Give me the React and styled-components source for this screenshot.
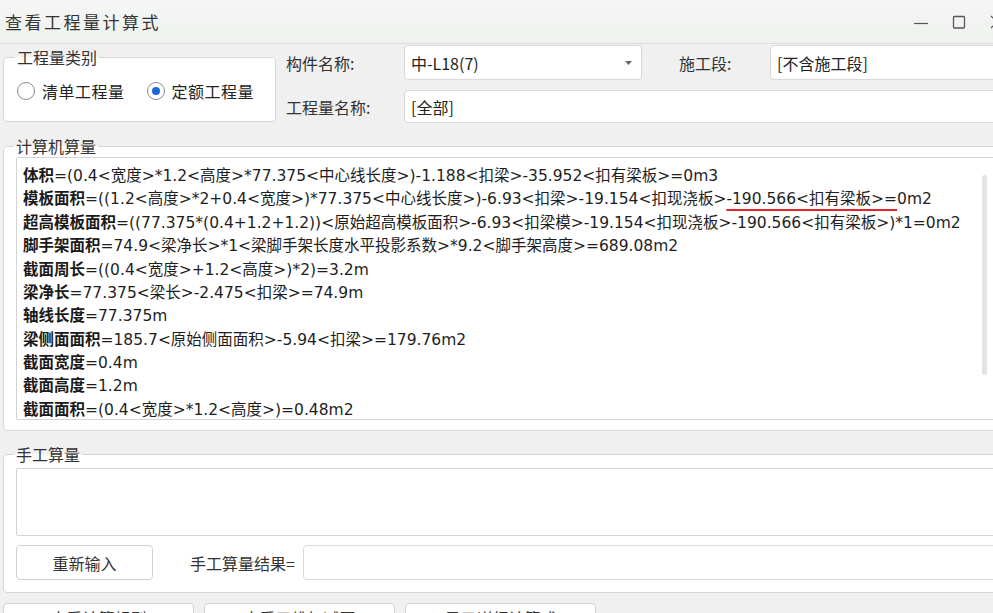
import styled, { createGlobalStyle } from 'styled-components'

const GlobalStyle = createGlobalStyle`
  html, body {
    margin: 0;
    padding: 0;
    overflow: hidden;
    background: #f0f0f0;
  }
  body {
    font-family: "Noto Sans CJK SC", "Noto Sans", sans-serif;
    color: #222;
  }
`

const Window = styled.div`
  width: 1016px;
  height: 613px;
  background: #f0f0f0;
  overflow: hidden;
`

const TitleBar = styled.div`
  height: 43px;
  border-bottom: 1px solid #dcdcdc;
  background: linear-gradient(#f5f6f5, #eef1ee);
  display: flex;
  align-items: center;
`

const Title = styled.div`
  flex: 1;
  padding-left: 5px;
  font-size: 17px;
  letter-spacing: 2.5px;
  color: #333;
`

const WinButton = styled.div`
  width: 38px;
  height: 43px;
  display: flex;
  align-items: center;
  justify-content: center;
  color: #555;
`

const Content = styled.div`
  padding: 0 3px;
`

const TopRow = styled.div`
  display: flex;
  align-items: flex-start;
  margin-top: 1px;
`

const Group = styled.fieldset`
  box-sizing: border-box;
  min-width: 0;
  width: ${(p) => (p.$w ? `${p.$w}px` : 'auto')};
  margin: ${(p) => p.$mt || 0}px 0 0;
  padding: ${(p) => p.$pad};
  border: 1px solid #d6d6d6;
  border-radius: 4px;
  background: #fff;
`

const Legend = styled.legend`
  padding: 0 2px;
  margin-left: -2px;
  font-size: 16px;
  line-height: 20px;
  color: #333;
`

const RadioRow = styled.div`
  display: flex;
  align-items: center;
  gap: 22px;
  height: 20px;
  white-space: nowrap;
`

const RadioOption = styled.label`
  display: flex;
  align-items: center;
  gap: 7px;
  font-size: 16px;
  letter-spacing: 0.5px;
  color: #222;
`

const RadioDot = styled.span`
  box-sizing: border-box;
  flex-shrink: 0;
  width: 18px;
  height: 18px;
  border-radius: 50%;
  border: 1px solid #8c8c8c;
  background: #fff;
  display: flex;
  align-items: center;
  justify-content: center;
  &::after {
    content: '';
    width: 8px;
    height: 8px;
    border-radius: 50%;
    background: ${(p) => (p.$checked ? '#1769e0' : 'transparent')};
  }
`

const Form = styled.div`
  flex: 1;
  margin-left: 10px;
  display: flex;
  flex-direction: column;
`

const FormRow = styled.div`
  display: flex;
  align-items: center;
  height: ${(p) => p.$h}px;
  margin-top: ${(p) => p.$mt || 0}px;
`

const FieldLabel = styled.div`
  width: ${(p) => p.$w}px;
  margin-left: ${(p) => p.$ml || 0}px;
  flex-shrink: 0;
  font-size: 16px;
  color: #333;
  white-space: nowrap;
`

const Field = styled.div`
  box-sizing: border-box;
  height: 100%;
  width: ${(p) => (p.$w ? `${p.$w}px` : 'auto')};
  flex: ${(p) => (p.$w ? 'none' : 1)};
  display: flex;
  align-items: center;
  justify-content: space-between;
  padding: 0 9px 0 6px;
  background: #fff;
  border: 1px solid #d9d9d9;
  border-radius: 4px;
  font-size: 16px;
  color: #222;
  white-space: nowrap;
`

const TextPanel = styled.div`
  box-sizing: border-box;
  height: ${(p) => p.$h}px;
  margin-top: ${(p) => p.$mt || 0}px;
  border: 1px solid #d4d4d4;
  border-radius: 2px;
  background: #fff;
  display: flex;
  overflow: hidden;
`

const Lines = styled.div`
  flex: 1;
  padding: 7px 0 0 6px;
  font-family: "DejaVu Sans", "Noto Sans CJK SC", sans-serif;
  font-size: 15.5px;
  line-height: 23.37px;
  color: #1e1e1e;
  white-space: nowrap;
  overflow: hidden;
`

const Key = styled.b`
  font-weight: 700;
  color: #1a1a1a;
`

const Marked = styled.span`
  text-decoration: underline;
  text-decoration-color: #e3242b;
  text-decoration-thickness: 1.5px;
  text-underline-offset: 5px;
`

const ScrollTrack = styled.div`
  width: 17px;
  flex-shrink: 0;
  padding-top: 17px;
`

const ScrollThumb = styled.div`
  width: 5px;
  height: 200px;
  border-radius: 3px;
  background: #e3e3e3;
`

const ActionRow = styled.div`
  display: flex;
  align-items: center;
  height: 35px;
  margin-top: 9px;
`

const Button = styled.button`
  box-sizing: border-box;
  width: ${(p) => p.$w}px;
  height: ${(p) => p.$h}px;
  padding: ${(p) => p.$pt || 0}px 0 0;
  display: flex;
  align-items: ${(p) => (p.$pt ? 'flex-start' : 'center')};
  justify-content: center;
  background: #fff;
  border: 1px solid #d2d2d2;
  border-radius: 4px;
  font-family: inherit;
  font-size: 16px;
  color: #333;
  flex-shrink: 0;
`

const ResultLabel = styled.div`
  margin: 0 8px 0 37px;
  font-size: 16px;
  color: #333;
  white-space: nowrap;
`

const Footer = styled.div`
  display: flex;
  gap: 10px;
  margin-top: 10px;
`

const lines = [
  ['体积', '=(0.4<宽度>*1.2<高度>*77.375<中心线长度>)-1.188<扣梁>-35.952<扣有梁板>=0m3'],
  ['模板面积', '=((1.2<高度>*2+0.4<宽度>)*77.375<中心线长度>)-6.93<扣梁>-19.154<扣现浇板>', '-190.566<扣有梁板>=', '0m2'],
  ['超高模板面积', '=((77.375*(0.4+1.2+1.2))<原始超高模板面积>-6.93<扣梁模>-19.154<扣现浇板>-190.566<扣有梁板>)*1=0m2'],
  ['脚手架面积', '=74.9<梁净长>*1<梁脚手架长度水平投影系数>*9.2<脚手架高度>=689.08m2'],
  ['截面周长', '=((0.4<宽度>+1.2<高度>)*2)=3.2m'],
  ['梁净长', '=77.375<梁长>-2.475<扣梁>=74.9m'],
  ['轴线长度', '=77.375m'],
  ['梁侧面面积', '=185.7<原始侧面面积>-5.94<扣梁>=179.76m2'],
  ['截面宽度', '=0.4m'],
  ['截面高度', '=1.2m'],
  ['截面面积', '=(0.4<宽度>*1.2<高度>)=0.48m2'],
]

function App() {
  return (
    <Window>
      <GlobalStyle />
      <TitleBar>
        <Title>查看工程量计算式</Title>
        <WinButton>
          <svg width="14" height="14" viewBox="0 0 14 14">
            <path d="M0 8.5h14" stroke="#555" strokeWidth="1.2" />
          </svg>
        </WinButton>
        <WinButton>
          <svg width="14" height="14" viewBox="0 0 14 14">
            <rect x="1.5" y="1.5" width="11" height="11.5" rx="1" fill="none" stroke="#555" strokeWidth="1.3" />
          </svg>
        </WinButton>
        <WinButton>
          <svg width="14" height="14" viewBox="0 0 14 14">
            <path d="M1 1l12 12M13 1L1 13" stroke="#555" strokeWidth="1.2" />
          </svg>
        </WinButton>
      </TitleBar>

      <Content>
        <TopRow>
          <Group $w={273} $mt={2} $pad="14px 13px 20px">
            <Legend>工程量类别</Legend>
            <RadioRow>
              <RadioOption>
                <RadioDot />
                清单工程量
              </RadioOption>
              <RadioOption>
                <RadioDot $checked />
                定额工程量
              </RadioOption>
            </RadioRow>
          </Group>

          <Form>
            <FormRow $h={35}>
              <FieldLabel $w={118}>构件名称:</FieldLabel>
              <Field $w={238}>
                中-L18(7)
                <svg width="7" height="4" viewBox="0 0 7 4">
                  <path d="M0 0h7L3.5 4z" fill="#666" />
                </svg>
              </Field>
              <FieldLabel $w={91} $ml={37}>施工段:</FieldLabel>
              <Field>[不含施工段]</Field>
            </FormRow>
            <FormRow $h={33} $mt={10}>
              <FieldLabel $w={118}>工程量名称:</FieldLabel>
              <Field>[全部]</Field>
            </FormRow>
          </Form>
        </TopRow>

        <Group $mt={13} $pad="0 12px 10px">
          <Legend>计算机算量</Legend>
          <TextPanel $h={263} $mt={1}>
            <Lines>
              {lines.map(([key, rest, marked, tail]) => (
                <div key={key}>
                  <Key>{key}</Key>
                  {rest}
                  {marked && <Marked>{marked}</Marked>}
                  {tail}
                </div>
              ))}
            </Lines>
            <ScrollTrack>
              <ScrollThumb />
            </ScrollTrack>
          </TextPanel>
        </Group>

        <Group $mt={13} $pad="4px 12px 12px">
          <Legend>手工算量</Legend>
          <TextPanel $h={68} />
          <ActionRow>
            <Button $w={137} $h={35}>重新输入</Button>
            <ResultLabel>手工算量结果=</ResultLabel>
            <Field />
          </ActionRow>
        </Group>

        <Footer>
          <Button $w={191} $h={34} $pt={2}>查看计算规则</Button>
          <Button $w={191} $h={34} $pt={2}>查看三维扣减图</Button>
          <Button $w={191} $h={34} $pt={2}>显示详细计算式</Button>
        </Footer>
      </Content>
    </Window>
  )
}

export default App
